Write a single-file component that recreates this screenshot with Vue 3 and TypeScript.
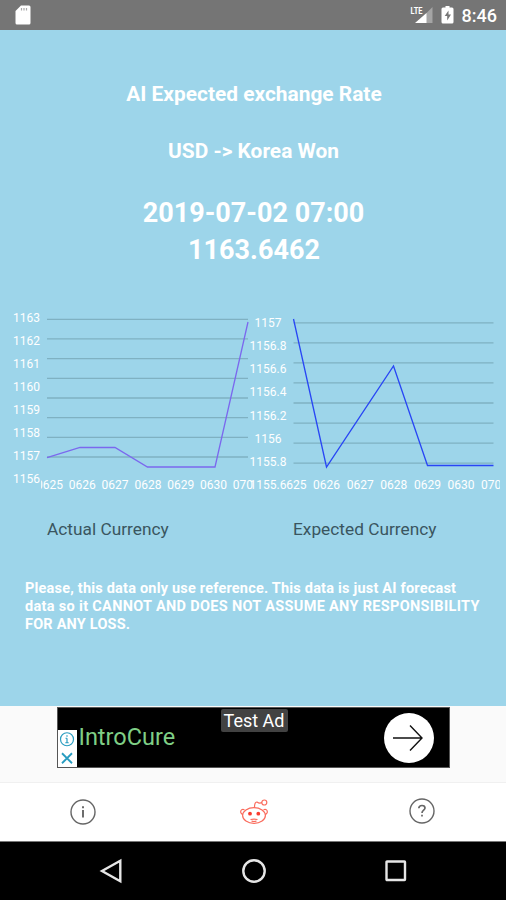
<script setup lang="ts">
interface Label {
  text: string
  x: number
  y: number
}
interface Chart {
  title: string
  color: string
  gridStart: number
  gridEnd: number
  gridTop: number
  gridStep: number
  clipStart: number
  points: string
  yLabels: Label[]
  xLabels: Label[]
}

const column = (values: string[], x: number, top: number, step: number): Label[] =>
  values.map((text, i) => ({ text, x, y: top + i * step }))
const row = (values: string[], start: number, step: number): Label[] =>
  values.map((text, i) => ({ text, x: start + i * step, y: 14 }))

const days = ['0625', '0626', '0627', '0628', '0629', '0630', '0701']

const charts: Chart[] = [
  {
    title: 'Actual Currency',
    color: '#7b68ee',
    gridStart: 47,
    gridEnd: 248,
    gridTop: 19.3,
    gridStep: 19.67,
    clipStart: 41,
    points: '47,157.6 80,147.5 115,147.5 147.5,167 215,167 248,22',
    yLabels: column(['1163', '1162', '1161', '1160', '1159', '1158', '1157', '1156'], 26.5, 22.4, 23),
    xLabels: row(days, 8.5, 32.8),
  },
  {
    title: 'Expected Currency',
    color: '#2846f5',
    gridStart: 45.5,
    gridEnd: 245.5,
    gridTop: 22.8,
    gridStep: 20.05,
    clipStart: 38.5,
    points: '45.5,19 78.5,167 145.5,66 179.5,165.5 245.5,165.5',
    yLabels: column(['1157', '1156.8', '1156.6', '1156.4', '1156.2', '1156', '1155.8', '1155.6'], 20, 26.6, 23.25),
    xLabels: row(days, 6.5, 33.6),
  },
]
</script>

<template>
  <div class="screen">
    <header class="status">
      <svg class="sd" viewBox="0 0 16 20"><path d="M6 .5h8q1.500 0 1.500 1.500v16q0 1.500-1.500 1.500H2Q.5 19.500.5 18V6z" fill="#fff" /><path d="M6.500 3v2.500M9 3v2.500M11.500 3v2.500" stroke="#aaa" stroke-width="1.200" /></svg>
      <div class="status-right">
        <svg class="signal" width="24" height="20" viewBox="0 0 24 20">
          <path d="M22.500 2v16H6.500z" fill="#fff" opacity=".35" />
          <path d="M16.500 8v10H5z" fill="#fff" />
          <text x=".5" y="8.500" class="lte" textLength="12" lengthAdjust="spacingAndGlyphs">LTE</text>
        </svg>
        <svg class="battery" width="14" height="20" viewBox="0 0 14 20"><path d="M4.500 1h4v1.500H11q1.500 0 1.500 1.500v13q0 1.500-1.500 1.500H2Q.5 18.500.5 17V4Q.5 2.500 2 2.500h2.500z" fill="#fff" /><path d="M7.500 5.500 3.700 11h2.500v4.500l3.800-6H7.500z" fill="#777" /></svg>
        <span class="clock">8:46</span>
      </div>
    </header>

    <main class="content">
      <h1 class="heading">AI Expected exchange Rate</h1>
      <h2 class="pair">USD -&gt; Korea Won</h2>
      <div class="rate">
        <div class="date">2019-07-02 07:00</div>
        <div class="value">1163.6462</div>
      </div>

      <div class="charts">
        <figure v-for="chart in charts" :key="chart.title" class="chart">
          <svg class="plot" height="200">
            <line
              v-for="n in 8"
              :key="n"
              class="grid"
              :x1="chart.gridStart"
              :x2="chart.gridEnd"
              :y1="chart.gridTop + (n - 1) * chart.gridStep"
              :y2="chart.gridTop + (n - 1) * chart.gridStep"
            />
            <text v-for="l in chart.yLabels" :key="l.text" class="tick" :x="l.x" :y="l.y">{{ l.text }}</text>
            <svg class="axis" :x="chart.clipStart" y="175" width="230" height="22">
              <text v-for="l in chart.xLabels" :key="l.text" class="tick" :x="l.x" :y="l.y">{{ l.text }}</text>
            </svg>
            <polyline :points="chart.points" fill="none" :stroke="chart.color" stroke-width="1.300" />
          </svg>
          <figcaption class="caption">{{ chart.title }}</figcaption>
        </figure>
      </div>

      <p class="notice">
        Please, this data only use reference. This data is just AI forecast<br />
        <span class="wide">data so it CANNOT AND DOES NOT ASSUME ANY RESPONSIBILITY</span><br />
        FOR ANY LOSS.
      </p>
    </main>

    <section class="ad-area">
      <div class="ad">
        <div class="ad-controls">
          <svg viewBox="0 0 18 18"><circle cx="9" cy="9" r="6.500" /><path d="M9 8v4.500M7.500 8H9M7.300 12.500h3.400M9 5v1.600" /></svg>
          <svg viewBox="0 0 18 18"><path d="M4 4l10 10M14 4 4 14" stroke-width="1.800" /></svg>
        </div>
        <span class="brand">IntroCure</span>
        <span class="badge">Test Ad</span>
        <svg class="go" viewBox="0 0 50 50"><circle cx="25" cy="25" r="25" fill="#fff" /><path d="M9 25h29M26 12.500 38 25 26 37.500" fill="none" stroke="#111" stroke-width="1.400" /></svg>
      </div>
    </section>

    <nav class="tabs">
      <svg class="tab-info" width="28" height="28" viewBox="0 0 28 28"><circle cx="14" cy="14" r="12" /><path d="M14 12v7.500M14 8.300v2" stroke-width="1.900" /></svg>
      <svg class="reddit" width="30" height="28" viewBox="0 0 30 28">
        <ellipse cx="15" cy="17.500" rx="11.400" ry="7.800" />
        <path d="M5.500 11.800C3 10.500 1.300 12.500 1.800 14.500q.5 1.400 2 2M24.500 11.800c2.500-1.300 4.200.7 3.700 2.700q-.5 1.400-2 2M15.500 9.500q0-5.500 2.500-5.500 2.500 1.800 5 .5M11.500 21.500q3.500-.8 7 0M12.500 23q2.500 1 5 0" />
        <circle cx="25.300" cy="4.500" r="2.500" />
        <circle class="eye" cx="11" cy="15.700" r="1.900" /><circle class="eye" cx="19.300" cy="15.700" r="1.900" />
      </svg>
      <svg class="tab-help" width="28" height="28" viewBox="0 0 28 28"><circle cx="14" cy="14" r="12" /><path d="M10.800 11.300q.2-2.800 3.200-2.800t3 2.600c0 2-3 2.300-3 4.900M14 17.800v1.800" stroke-width="1.700" /></svg>
    </nav>

    <footer class="system">
      <svg viewBox="0 0 26 26"><path d="M21.300 2.700v20.600L3 13z" /></svg>
      <svg viewBox="0 0 26 26"><circle cx="13" cy="13" r="10.700" /></svg>
      <svg viewBox="0 0 26 26"><rect x="3.500" y="3.500" width="18.500" height="18.500" rx=".5" /></svg>
    </footer>
  </div>
</template>

<style>
body {
  margin: 0;
  background: #9dd5ea;
}
</style>

<style scoped>
.screen {
  width: 506px;
  height: 900px;
  display: flex;
  flex-direction: column;
  overflow: hidden;
  font-family: Roboto, "Liberation Sans", sans-serif;
  color: #fff;
}
.status {
  height: 30px;
  flex: none;
  box-sizing: border-box;
  padding: 0 9px 0 15px;
  background: #757575;
  display: flex;
  align-items: center;
  justify-content: space-between;
}
.sd {
  width: 16px;
  height: 20px;
}
.status-right {
  display: flex;
  align-items: center;
}
.signal {
  margin-right: 7px;
}
.lte {
  font-size: 9.500px;
  font-weight: 700;
  fill: #fff;
}
.battery {
  margin-right: 7px;
}
.clock {
  font-size: 18px;
  font-weight: 500;
  line-height: 30px;
  padding-top: 2px;
}
.content {
  height: 675.500px;
  flex: none;
  background: #9dd5ea;
  display: flex;
  flex-direction: column;
}
.heading,
.pair {
  margin: 0;
  text-align: center;
  font-size: 20.900px;
  line-height: 26px;
  font-weight: 700;
}
.heading {
  margin-top: 51px;
  padding-left: 2px;
}
.pair {
  margin-top: 31px;
  padding-left: 1px;
}
.rate {
  margin-top: 31px;
  text-align: center;
  font-size: 27px;
  line-height: 37px;
  font-weight: 700;
}
.date {
  padding-left: 1px;
}
.value {
  padding-left: 2px;
}
.charts {
  display: grid;
  grid-template-columns: 253px 247px;
  height: 248px;
  margin-top: 31px;
}
.chart {
  margin: 0;
  display: flex;
  flex-direction: column;
}
.chart + .chart {
  margin-left: -5px;
}
.plot {
  display: block;
  width: 100%;
  overflow: hidden;
}
.axis {
  overflow: hidden;
}
.grid {
  stroke: #7fb1c2;
  stroke-width: 1.300;
}
.tick {
  font-size: 12px;
  fill: #fff;
  text-anchor: middle;
}
.caption {
  margin: 18px 0 0 47px;
  color: #3a5560;
  font-size: 17.300px;
  line-height: 22px;
}
.chart + .chart .caption {
  margin-left: 45px;
}
.notice {
  margin: 32px 0 0 25px;
  font-size: 14.500px;
  line-height: 18px;
  font-weight: 700;
  letter-spacing: 0.200px;
  white-space: nowrap;
}
.wide {
  letter-spacing: 0.320px;
}
.ad-area {
  height: 77px;
  flex: none;
  box-sizing: border-box;
  padding: 1.500px 0 0 56.500px;
  background: #fafafa;
  border-bottom: 1.500px solid #f0f0f0;
}
.ad {
  position: relative;
  width: 393.500px;
  height: 61px;
  box-sizing: border-box;
  border: 1px solid #555;
  background: #000;
  display: flex;
  align-items: center;
}
.ad-controls {
  width: 19px;
  height: 37px;
  align-self: flex-end;
  background: #fff;
  display: flex;
  flex-direction: column;
  align-items: center;
}
.ad-controls svg {
  width: 18px;
  height: 18.500px;
  fill: none;
  stroke: #289cc0;
  stroke-width: 1.200;
}
.brand {
  margin-left: 2px;
  padding-bottom: 2px;
  color: #7fcf86;
  font-size: 23.500px;
}
.badge {
  position: absolute;
  left: 163px;
  top: 1px;
  width: 67px;
  height: 23px;
  border-radius: 2px;
  background: #424242;
  text-align: center;
  font-size: 18px;
  line-height: 23px;
}
.go {
  width: 50px;
  height: 50px;
  margin-left: auto;
  margin-right: 15.500px;
}
.tabs {
  height: 59px;
  flex: none;
  box-sizing: border-box;
  padding: 1px 70px 0 69px;
  background: #fff;
  border-bottom: 1px solid #777;
  display: flex;
  align-items: center;
  justify-content: space-between;
}
.tabs svg {
  fill: none;
  stroke: #666;
  stroke-width: 1.400;
}
.tab-help {
  margin-bottom: 2px;
}
.tabs .reddit {
  margin-left: 2px;
  stroke: #fa6b5c;
  stroke-width: 1.200;
}
.reddit .eye {
  fill: #fa3b2e;
  stroke: none;
}
.system {
  flex: 1;
  padding: 0 97px 0 99px;
  background: #000;
  display: flex;
  align-items: center;
  justify-content: space-between;
}
.system svg {
  width: 26px;
  height: 26px;
  fill: none;
  stroke: #e6e6e6;
  stroke-width: 2.400;
}
</style>
